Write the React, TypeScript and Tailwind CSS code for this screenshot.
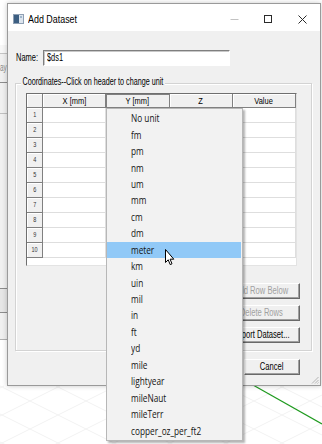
import type { ReactNode } from "react";

const UNITS = [
  "No unit",
  "fm",
  "pm",
  "nm",
  "um",
  "mm",
  "cm",
  "dm",
  "meter",
  "km",
  "uin",
  "mil",
  "in",
  "ft",
  "yd",
  "mile",
  "lightyear",
  "mileNaut",
  "mileTerr",
  "copper_oz_per_ft2",
];

const COLUMNS = [
  { label: "X [mm]", width: "w-[63px]", active: false },
  { label: "Y [mm]", width: "w-[64px]", active: true },
  { label: "Z", width: "w-[63px]", active: false },
  { label: "Value", width: "w-[63px]", active: false },
];

const ROWS = [1, 2, 3, 4, 5, 6, 7, 8, 9, 10];

// the capture is squeezed sideways, so text is narrowed to match
function Narrow({ children, className = "" }: { children: ReactNode; className?: string }) {
  return <span className={`inline-block shrink-0 whitespace-nowrap ${className}`}>{children}</span>;
}

function Backdrop() {
  const grid: number[][] = [];
  for (let i = -8; i < 10; i++) {
    grid.push([i * 56, 386, i * 56 + 120, 446]);
    grid.push([i * 56 + 60, 386, i * 56 - 60, 446]);
  }
  return (
    <svg className="absolute inset-0" width="322" height="444">
      {grid.map(([x1, y1, x2, y2], i) => (
        <line key={i} x1={x1} y1={y1} x2={x2} y2={y2} stroke="#f2f2f2" strokeWidth="1" />
      ))}
      <line x1="253" y1="385" x2="322" y2="424" stroke="#1e9a1e" strokeWidth="1.2" />
    </svg>
  );
}

function BackWindow() {
  return (
    <div className="absolute left-0 top-[45px] flex w-[7px] flex-col overflow-hidden text-[#8a8a8a]">
      <div className="h-[8px] bg-[#f7f7f7]" />
      <div className="h-[29px] border-t border-[#c4c4c4] bg-[#f0f0f0] pt-[9px]">
        <div className="leading-[10px]">
          <Narrow className="origin-left scale-x-[0.64]">ay</Narrow>
        </div>
      </div>
      <div className="h-[31px] border-t border-[#8c8c8c] bg-[#f0f0f0]" />
      <div className="h-[175px] border-t border-[#c0c0c0] bg-[#f0f0f0]" />
      <div className="h-[24px] border-t border-[#8c8c8c] bg-[#e6e6e6]" />
      <div className="h-[27px] border-t border-[#8c8c8c] bg-[#f0f0f0]" />
      <div className="h-[1px] bg-[#b0b0b0]" />
    </div>
  );
}

function TitleBar() {
  return (
    <div className="flex h-[27px] items-center bg-white pt-[3px]">
      <svg className="ml-[5px] shrink-0" width="11" height="10" viewBox="0 0 11 10">
        <rect x="0.5" y="0.5" width="10" height="9" fill="#dde5ee" stroke="#8fa0b4" />
        <rect x="1" y="1" width="5" height="8" fill="#3d5f82" />
        <rect x="7" y="2" width="2" height="2" fill="#9fb6cc" />
      </svg>
      <div className="ml-[4px] text-[11px] leading-[12px]">
        <Narrow className="origin-left scale-x-[0.81]">Add Dataset</Narrow>
      </div>
      <div className="ml-auto flex h-full">
        <div className="flex w-[34px] items-center justify-center">
          <svg width="9" height="9" viewBox="0 0 9 9">
            <line x1="0.5" y1="4.5" x2="8.5" y2="4.5" stroke="#c2c2c2" />
          </svg>
        </div>
        <div className="flex w-[34px] items-center justify-center">
          <svg width="8" height="8" viewBox="0 0 8 8">
            <rect x="0.5" y="0.5" width="7" height="7" fill="none" stroke="#2b2b2b" />
          </svg>
        </div>
        <div className="flex w-[35px] items-center justify-center">
          <svg width="9" height="9" viewBox="0 0 9 9">
            <path d="M0.5 0.5 L8.5 8.5 M8.5 0.5 L0.5 8.5" stroke="#2b2b2b" strokeWidth="1" />
          </svg>
        </div>
      </div>
    </div>
  );
}

function DataGrid() {
  return (
    <div className="ml-[10px] mt-[9px] flex h-[173px] w-[271px] flex-col border-b border-l border-r border-t border-[#6f6f6f] border-b-[#e3e3e3] border-r-[#e3e3e3] bg-white">
      <div className="flex h-[14px]">
        <div className="w-[16px] shrink-0 border-b border-r border-[#808080] bg-[#f0f0f0] shadow-[inset_1px_1px_0_#fff]" />
        {COLUMNS.map((col) => (
          <div
            key={col.label}
            className={`flex ${col.width} shrink-0 items-center justify-center border-b border-r border-[#808080] bg-[#f0f0f0] text-[8.5px] leading-[10px] ${
              col.active ? "shadow-[inset_1px_1px_0_#808080]" : "shadow-[inset_1px_1px_0_#fff]"
            }`}
          >
            <Narrow className="origin-center scale-x-[0.88]">{col.label}</Narrow>
          </div>
        ))}
      </div>
      {ROWS.map((n) => (
        <div key={n} className="flex h-[15px]">
          <div className="flex w-[16px] shrink-0 items-center justify-center border-b border-r border-[#808080] bg-[#f0f0f0] text-[6.5px] leading-[8px] text-[#333] shadow-[inset_1px_1px_0_#fff]">
            <Narrow className="origin-center scale-x-[0.85]">{n}</Narrow>
          </div>
          {COLUMNS.map((col) => (
            <div key={col.label} className={`${col.width} shrink-0 border-b border-r border-[#dedede]`} />
          ))}
        </div>
      ))}
    </div>
  );
}

function DialogButton({ label, disabled = false, width = "w-[78px]" }: { label: string; disabled?: boolean; width?: string }) {
  return (
    <div
      className={`flex h-[16px] ${width} items-center justify-center overflow-hidden border border-b-[#696969] border-l-white border-r-[#696969] border-t-white bg-[#f0f0f0] leading-[12px] shadow-[inset_-1px_-1px_0_#a0a0a0] ${
        disabled ? "text-[#a0a0a0]" : "text-black"
      }`}
    >
      <Narrow className="origin-center scale-x-[0.76]">{label}</Narrow>
    </div>
  );
}

function AddDatasetDialog() {
  return (
    <div className="absolute left-[7px] top-[3px] flex h-[383px] w-[314px] flex-col border border-[#9a9a9a] bg-[#f0f0f0] shadow-[0_0_5px_rgba(0,0,0,0.22)]">
      <TitleBar />
      <div className="relative flex flex-1 flex-col">
        <div className="ml-[8px] mt-[19px] flex h-[16px] items-center">
          <div className="w-[27px] leading-[12px]">
            <Narrow className="origin-left scale-x-[0.75]">Name:</Narrow>
          </div>
          <div className="flex h-[16px] w-[187px] items-center border border-[#7f7f7f] border-b-white border-r-white bg-white pl-[3px] leading-[12px] shadow-[inset_1px_1px_0_#c8c8c8]">
            <Narrow className="origin-left scale-x-[0.74]">$ds1</Narrow>
          </div>
        </div>

        <div className="relative ml-[7px] mr-[8px] mt-[17px] flex h-[268px] flex-col border border-[#d3d3d3] shadow-[inset_1px_1px_0_#fff,1px_1px_0_#fff]">
          <span className="absolute left-[5px] top-[-8px] leading-[12px]">
            <Narrow className="origin-left scale-x-[0.72] bg-[#f0f0f0] px-[2px]">Coordinates--Click on header to change unit</Narrow>
          </span>
          <DataGrid />
          <div className="mr-[11px] mt-[17px] flex flex-col items-end gap-[6px]">
            <DialogButton label="Add Row Below" disabled />
            <DialogButton label="Delete Rows" disabled />
            <DialogButton label="Export Dataset..." />
          </div>
        </div>

        <div className="mr-[20px] mt-[8px] flex justify-end">
          <DialogButton label="Cancel" width="w-[56px]" />
        </div>

        <svg className="absolute bottom-[1px] right-[1px]" width="8" height="8" viewBox="0 0 8 8">
          <path d="M7.5 1 L1 7.5 M7.5 4 L4 7.5 M7.5 6.5 L6.5 7.5" stroke="#b4b4b4" strokeWidth="1" />
        </svg>
      </div>
    </div>
  );
}

function UnitMenu() {
  return (
    <div className="absolute left-[106px] top-[108px] w-[137px] border border-[#b7b7b7] bg-[#f2f2f2] py-[1px] font-['Open_Sans',sans-serif] text-[11px] text-[#141414] shadow-[2px_2px_2px_rgba(0,0,0,0.3)]">
      {UNITS.map((unit) => (
        <div
          key={unit}
          className={`mr-[1px] flex h-[16.45px] items-center pl-[24px] leading-[14px] ${unit === "meter" ? "bg-[#91c9f7]" : ""}`}
        >
          <Narrow className="origin-left scale-x-[0.75]">{unit}</Narrow>
        </div>
      ))}
    </div>
  );
}

function Cursor() {
  return (
    <svg className="absolute left-[165px] top-[249px]" width="10" height="17" viewBox="0 0 10 17">
      <path
        d="M0.5 0.5 V13.5 L3.2 10.8 L5.2 15.6 L7 14.8 L5.1 10.2 H8.8 Z"
        fill="#fff"
        stroke="#000"
        strokeWidth="1"
        strokeLinejoin="round"
      />
    </svg>
  );
}

export default function App() {
  return (
    <div className="relative h-[444px] w-[322px] overflow-hidden bg-white font-['Liberation_Sans',Arial,sans-serif] text-[10px] text-black">
      <Backdrop />
      <BackWindow />
      <AddDatasetDialog />
      <UnitMenu />
      <Cursor />
    </div>
  );
}
